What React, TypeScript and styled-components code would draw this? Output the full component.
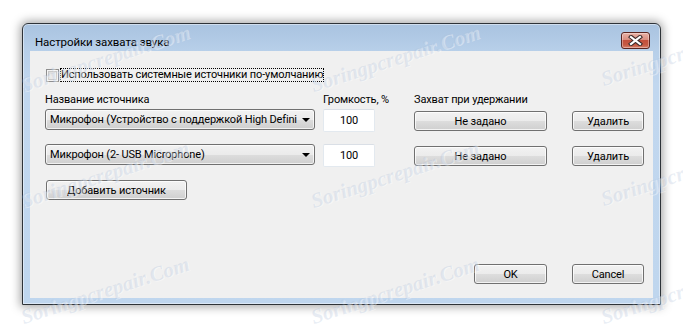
import React, {useState} from "react";
import styled, {createGlobalStyle} from "styled-components";

const GlobalStyle = createGlobalStyle`
  html, body {
    margin: 0;
    padding: 0;
    background: #ffffff;
  }
  body {
    font-family: Roboto, "Liberation Sans", Arial, sans-serif;
    font-size: 11px;
    letter-spacing: -0.15px;
    color: #000;
  }
`;

const sources = [
    {name: 'Микрофон (Устройство с поддержкой High Defini', volume: '100'},
    {name: 'Микрофон (2- USB Microphone)', volume: '100'},
];

const marks = [
    {x: 25, y: 96}, {x: 315, y: 96}, {x: 605, y: 90},
    {x: 25, y: 212}, {x: 315, y: 212}, {x: 605, y: 210},
    {x: 25, y: 328}, {x: 315, y: 328}, {x: 605, y: 328},
];

const App: React.FC = () => {
    const [useDefault, setUseDefault] = useState(false);

    return (
        <>
            <GlobalStyle/>
            <Page>
                <Window>
                    <TitleBar>
                        <Title>Настройки захвата звука</Title>
                        <CloseButton>
                            <svg width="15" height="11" viewBox="0 0 15 11">
                                <path d="M3 2 L12 9 M12 2 L3 9" stroke="#3b2a2a" strokeWidth="4.2"
                                      strokeLinecap="square"/>
                                <path d="M3 2 L12 9 M12 2 L3 9" stroke="#ffffff" strokeWidth="2.2"
                                      strokeLinecap="square"/>
                            </svg>
                        </CloseButton>
                    </TitleBar>
                    <Client>
                        <CheckRow onClick={() => setUseDefault(v => !v)}>
                            <CheckBox checked={useDefault}/>
                            <FocusLabel>Использовать системные источники по-умолчанию</FocusLabel>
                        </CheckRow>

                        <SourceGrid>
                            <Caption>Название источника</Caption>
                            <Caption>Громкость, %</Caption>
                            <Caption>Захват при удержании</Caption>
                            <span/>
                            {sources.map((s, i) => (
                                <React.Fragment key={i}>
                                    <Combo>
                                        <ComboText>{s.name}</ComboText>
                                        <ComboArrow/>
                                    </Combo>
                                    <VolumeInput>{s.volume}</VolumeInput>
                                    <Button width={133} offset={2}>Не задано</Button>
                                    <Button width={72} offset={2}>Удалить</Button>
                                </React.Fragment>
                            ))}
                        </SourceGrid>

                        <AddRow>
                            <Button width={141}>Добавить источник</Button>
                        </AddRow>

                        <DialogButtons>
                            <Button width={73}>OK</Button>
                            <Button width={72}>Cancel</Button>
                        </DialogButtons>
                    </Client>
                </Window>
                <Watermarks>
                    {marks.map((m, i) => (
                        <Mark key={i} style={{left: m.x, top: m.y - 22}}>Soringpcrepair.Com</Mark>
                    ))}
                </Watermarks>
            </Page>
        </>
    );
};

const Page = styled.div`
  position: relative;
  width: 683px;
  height: 329px;
  overflow: hidden;
  padding: 23px 0 0 22px;
  box-sizing: border-box;
`;

const Window = styled.div`
  width: 639px;
  height: 282px;
  box-sizing: border-box;
  display: flex;
  flex-direction: column;
  border: 1px solid #2e3338;
  border-radius: 6px 6px 0 0;
  padding: 0 7px 6px 7px;
  background: linear-gradient(180deg, #a9c3e0 0px, #b7cfe9 26px, #c1d7ef 60px, #bfd6ee 100%);
  box-shadow: 0 0 10px 2px rgba(0, 0, 0, 0.35), inset 0 0 0 1px rgba(255, 255, 255, 0.45);
`;

const TitleBar = styled.div`
  height: 27px;
  display: flex;
  align-items: flex-start;
  justify-content: space-between;
`;

const Title = styled.div`
  font-size: 11.5px;
  letter-spacing: -0.1px;
  color: #000;
  padding: 11px 0 0 5px;
  line-height: 14px;
`;

const CloseButton = styled.div`
  width: 29px;
  height: 17px;
  margin: 8px 3px 0 0;
  box-sizing: border-box;
  border: 1px solid #5b2520;
  border-radius: 3px;
  display: flex;
  align-items: center;
  justify-content: center;
  background: linear-gradient(180deg, #e8b1a6 0%, #d98e80 45%, #c4503c 50%, #c65a43 80%, #d9836f 100%);
  box-shadow: inset 0 0 0 1px rgba(255, 255, 255, 0.35);
`;

const Client = styled.div`
  flex: 1;
  background: #f0f0f0;
  display: flex;
  flex-direction: column;
  padding: 17px 9px 14px 15px;
  box-sizing: border-box;
`;

const CheckRow = styled.div`
  display: flex;
  align-items: center;
  height: 14px;
  cursor: default;
`;

const CheckBox = styled.div<{ checked: boolean }>`
  width: 13px;
  height: 13px;
  box-sizing: border-box;
  margin-left: 1px;
  border: 1px solid #8f8f8f;
  background: linear-gradient(135deg, #d4d4d4 0%, #eaeaea 60%, #f6f6f6 100%);
  box-shadow: inset 0 0 0 1px #f4f4f4, inset 0 0 0 2px #c8c8c8;
`;

const FocusLabel = styled.span`
  margin-left: 1px;
  height: 14px;
  line-height: 14px;
  padding: 0 1px;
  box-sizing: border-box;
  outline: 1px dotted #000;
  outline-offset: -1px;
  white-space: nowrap;
`;

const SourceGrid = styled.div`
  display: grid;
  grid-template-columns: 278px 91px 158px 72px;
  grid-template-rows: 16px 35px 23px;
  margin-top: 11px;
  align-items: start;
`;

const Caption = styled.div`
  line-height: 14px;
  white-space: nowrap;
`;

const Combo = styled.div`
  width: 270px;
  height: 21px;
  box-sizing: border-box;
  display: flex;
  align-items: center;
  padding: 0 4px 0 4px;
  border: 1px solid #707070;
  border-radius: 3px;
  background: linear-gradient(180deg, #f2f2f2 0%, #ebebeb 50%, #dddddd 51%, #cfcfcf 100%);
  box-shadow: inset 0 0 0 1px rgba(255, 255, 255, 0.7);
`;

const ComboText = styled.span`
  flex: 1;
  overflow: hidden;
  white-space: nowrap;
`;

const ComboArrow = styled.span`
  width: 0;
  height: 0;
  margin-left: 4px;
  border-left: 4px solid transparent;
  border-right: 4px solid transparent;
  border-top: 4px solid #000;
`;

const VolumeInput = styled.div`
  width: 52px;
  height: 23px;
  box-sizing: border-box;
  display: flex;
  align-items: center;
  justify-content: center;
  background: #fff;
  border: 1px solid #e3e9ef;
  border-top-color: #dadfe6;
  border-radius: 2px;
`;

const Button = styled.div<{ width: number; offset?: number }>`
  width: ${props => props.width}px;
  height: 20px;
  margin-top: ${props => props.offset || 0}px;
  box-sizing: border-box;
  display: flex;
  align-items: center;
  justify-content: center;
  border: 1px solid #707070;
  border-radius: 3px;
  background: linear-gradient(180deg, #f2f2f2 0%, #ebebeb 50%, #dddddd 51%, #cfcfcf 100%);
  box-shadow: inset 0 0 0 1px rgba(255, 255, 255, 0.75);
  white-space: nowrap;
  cursor: default;
`;

const AddRow = styled.div`
  display: flex;
  margin-top: 13px;
  padding-left: 1px;
`;

const DialogButtons = styled.div`
  margin-top: auto;
  display: flex;
  justify-content: flex-end;
  gap: 25px;
`;

const Watermarks = styled.div`
  position: absolute;
  inset: 0;
  pointer-events: none;
`;

const Mark = styled.span`
  position: absolute;
  font-family: "Liberation Serif", "Times New Roman", serif;
  font-style: italic;
  font-weight: bold;
  font-size: 21px;
  line-height: 22px;
  letter-spacing: 0;
  white-space: nowrap;
  color: rgba(175, 192, 218, 0.28);
  text-shadow: 1px 1px 0 rgba(255, 255, 255, 0.4);
  transform: rotate(-18deg);
  transform-origin: left bottom;
`;

export default App;
